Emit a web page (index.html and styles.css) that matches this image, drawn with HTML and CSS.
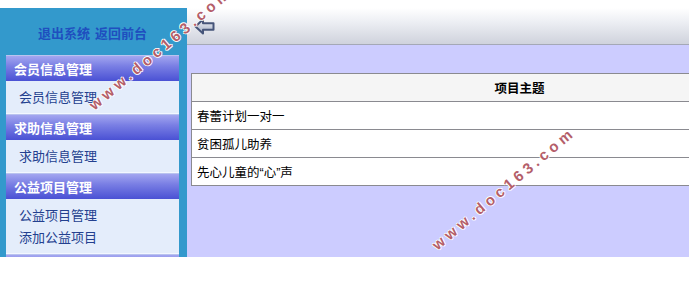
FILE: index.html
```html
<!DOCTYPE html>
<html lang="zh">
<head>
<meta charset="utf-8">
<title>后台管理</title>
<link rel="stylesheet" href="styles.css">
</head>
<body>
<div class="page">
  <aside class="sidebar">
    <div class="top-links"><a>退出系统</a><a>返回前台</a></div>
    <div class="group">
      <div class="group-title">会员信息管理</div>
      <ul class="group-items"><li>会员信息管理</li></ul>
    </div>
    <div class="group">
      <div class="group-title">求助信息管理</div>
      <ul class="group-items"><li>求助信息管理</li></ul>
    </div>
    <div class="group">
      <div class="group-title">公益项目管理</div>
      <ul class="group-items"><li>公益项目管理</li><li>添加公益项目</li></ul>
    </div>
    <div class="group">
      <div class="group-title"></div>
    </div>
  </aside>
  <main class="main">
    <div class="toolbar">
      <svg class="back" width="21" height="17" viewBox="0 0 21 17">
        <defs>
          <linearGradient id="ag" x1="0" y1="0" x2="0" y2="1">
            <stop offset="0" stop-color="#f2f4f8"/>
            <stop offset="1" stop-color="#a2adc4"/>
          </linearGradient>
        </defs>
        <path d="M1.5 8.5 L9 1.5 L9 5.2 L19.5 5.2 L19.5 11.8 L9 11.8 L9 15.5 Z" fill="url(#ag)" stroke="#46557a" stroke-width="2" stroke-linejoin="round"/>
      </svg>
    </div>
    <div class="content">
      <table class="list">
        <thead><tr><th>项目主题</th></tr></thead>
        <tbody>
          <tr><td>春蕾计划一对一</td></tr>
          <tr><td>贫困孤儿助养</td></tr>
          <tr><td>先心儿童的“心”声</td></tr>
        </tbody>
      </table>
    </div>
  </main>
</div>
<div class="wm wm1">www.doc163.com</div>
<div class="wm wm2">www.doc163.com</div>
</body>
</html>
```
FILE: styles.css
```css
html, body {
  margin: 0;
  padding: 0;
  background: #ffffff;
  overflow: hidden;
}
body {
  font-family: "Noto Sans CJK SC", "Noto Sans", sans-serif;
  font-size: 12.5px;
  color: #000;
}
.page {
  display: flex;
  margin-top: 8px;
  height: 249px;
  overflow: hidden;
}
.sidebar {
  width: 173px;
  flex: none;
  background: #3399cc;
  padding: 0 8px 0 6px;
  overflow: hidden;
}
.top-links {
  height: 47px;
  display: flex;
  align-items: center;
  gap: 5px;
  padding-left: 32px;
  padding-top: 2px;
  box-sizing: border-box;
  font-weight: bold;
  font-size: 13px;
  color: #1f4fbf;
}
.group-title {
  height: 26px;
  line-height: 26px;
  box-sizing: border-box;
  padding-left: 8px;
  color: #fff;
  font-weight: bold;
  font-size: 13px;
  background: linear-gradient(to bottom, #a3a6f0 0%, #7a7fe4 40%, #4a51d4 100%);
  border-top: 1px solid #b9c3ef;
}
.group-items {
  list-style: none;
  margin: 0;
  padding: 5px 0 5px 13px;
  background: #e4edfb;
  border-bottom: 1px solid #f3f7ff;
  color: #23408f;
  font-size: 13px;
}
.group-items li {
  line-height: 22px;
}
.main {
  flex: 1;
  background: #ccccff;
  overflow: hidden;
}
.toolbar {
  height: 36px;
  background: linear-gradient(to bottom, #ffffff 0%, #eceef3 40%, #cfd2dc 100%);
  border-bottom: 1px solid #a4a8b6;
  display: flex;
  align-items: center;
  padding-left: 7px;
}
.content {
  padding: 28px 0 0 4px;
}
.list {
  width: 652px;
  border-collapse: collapse;
  background: #ffffff;
  border: 1px solid #7a7a80;
}
.list th, .list td {
  height: 27px;
  padding: 0 0 0 5px;
  border: 1px solid #8a8a90;
  font-size: 12.5px;
}
.list th {
  background: #f5f5f5;
  text-align: center;
  font-weight: bold;
}
.list td {
  text-align: left;
  font-family: "Liberation Sans", "Noto Sans CJK SC", sans-serif;
}
.wm {
  position: absolute;
  font-family: "Liberation Sans", Arial, sans-serif;
  font-weight: bold;
  font-size: 15px;
  letter-spacing: 4px;
  color: #b45e6a;
  text-shadow: 1px 0 0 #fff, -1px 0 0 #fff, 0 1px 0 #fff, 0 -1px 0 #fff;
  transform-origin: 0 50%;
  transform: rotate(-40deg);
  white-space: nowrap;
  pointer-events: none;
}
.wm1 { left: 91px; top: 98px; }
.wm2 { left: 434px; top: 238px; }
```
